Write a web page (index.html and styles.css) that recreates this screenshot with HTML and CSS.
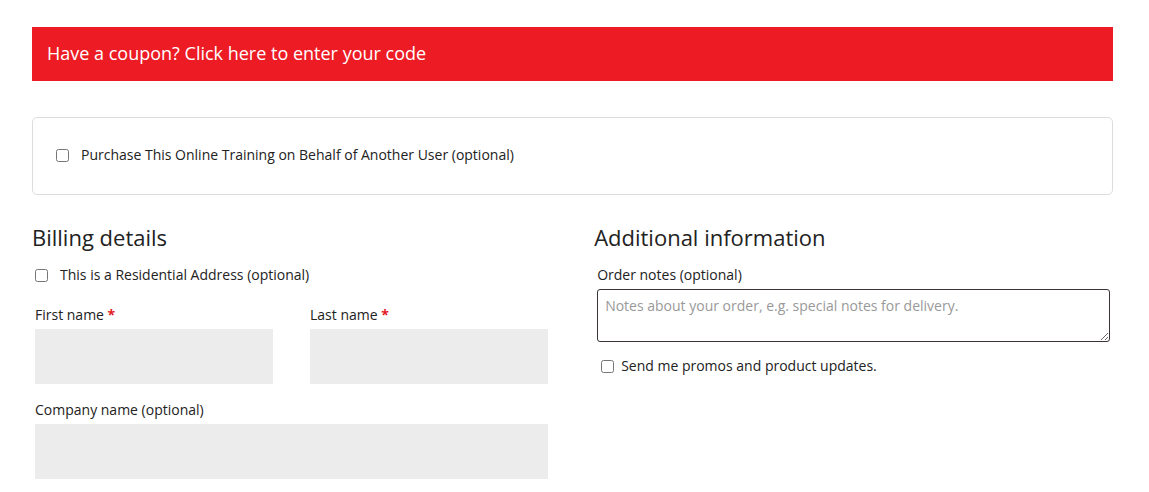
FILE: index.html
```html
<!DOCTYPE html>
<html lang="en">

<head>
     <meta charset="UTF-8">
     <meta name="viewport" content="width=device-width, initial-scale=1.0">
     <title>Checkout</title>
     <link rel="stylesheet" href="styles.css">
</head>

<body>
     <div class="checkout">
          <div class="coupon-bar">Have a coupon? Click here to enter your code</div>

          <div class="gift-box">
               <label class="check-row">
                    <input type="checkbox">
                    <span>Purchase This Online Training on Behalf of Another User (optional)</span>
               </label>
          </div>

          <form class="columns">
               <div class="col">
                    <h3>Billing details</h3>
                    <label class="check-row residential">
                         <input type="checkbox">
                         <span>This is a Residential Address (optional)</span>
                    </label>
                    <div class="row-split">
                         <div class="form-row half">
                              <label>First name <abbr class="required">*</abbr></label>
                              <input type="text" class="field">
                         </div>
                         <div class="form-row half">
                              <label>Last name <abbr class="required">*</abbr></label>
                              <input type="text" class="field">
                         </div>
                    </div>
                    <div class="form-row">
                         <label>Company name (optional)</label>
                         <input type="text" class="field">
                    </div>
               </div>

               <div class="col">
                    <h3>Additional information</h3>
                    <div class="form-row notes">
                         <label>Order notes (optional)</label>
                         <textarea placeholder="Notes about your order, e.g. special notes for delivery."></textarea>
                    </div>
                    <label class="check-row promos">
                         <input type="checkbox">
                         <span>Send me promos and product updates.</span>
                    </label>
               </div>
          </form>
     </div>
</body>

</html>
```

FILE: styles.css
```css
body {
     margin: 0;
     font-family: 'Open Sans', 'Noto Sans', sans-serif;
     color: #333;
     background: #fff;
}

.checkout {
     padding: 27px 36px 0 32px;
}

.coupon-bar {
     background: #ed1c24;
     color: #fff;
     font-size: 18px;
     line-height: 24px;
     padding: 14px 15px 16px 15px;
}

.gift-box {
     margin-top: 36px;
     border: 1px solid #ddd;
     border-radius: 5px;
     padding: 27px 23px 29px 23px;
}

.check-row {
     display: flex;
     align-items: center;
     font-size: 14px;
     line-height: 20px;
     color: #222;
}

.check-row input {
     margin: 0 12px 0 0;
     width: 13px;
     height: 13px;
}

.columns {
     display: flex;
     justify-content: space-between;
     margin-top: 27px;
}

.col {
     width: 48%;
}

h3 {
     font-size: 22px;
     font-weight: 400;
     line-height: 30px;
     margin: 0 0 13px 0;
     color: #222;
}

.residential {
     padding-left: 3px;
     margin-bottom: 20px;
}

.row-split {
     display: flex;
     justify-content: space-between;
}

.form-row {
     padding: 0 3px;
     margin-bottom: 16px;
}

.form-row.half {
     width: 47%;
     box-sizing: border-box;
}

.form-row label {
     display: block;
     font-size: 14px;
     line-height: 20px;
     margin-bottom: 4px;
     color: #222;
}

.required {
     color: #e2191f;
     font-weight: 700;
     text-decoration: none;
     border: none;
}

.field {
     display: block;
     width: 100%;
     box-sizing: border-box;
     height: 55px;
     border: none;
     background: #ececec;
     font-family: inherit;
}

.notes {
     margin-bottom: 14px;
}

textarea {
     display: block;
     width: 100%;
     box-sizing: border-box;
     height: 53px;
     border: 1px solid #3a3434;
     border-radius: 3px;
     padding: 6px 7px;
     font-family: inherit;
     font-size: 14px;
     line-height: 20px;
}

textarea::placeholder {
     color: #999;
}

.promos {
     padding-left: 7px;
}

.promos input {
     margin-right: 7px;
}
```
